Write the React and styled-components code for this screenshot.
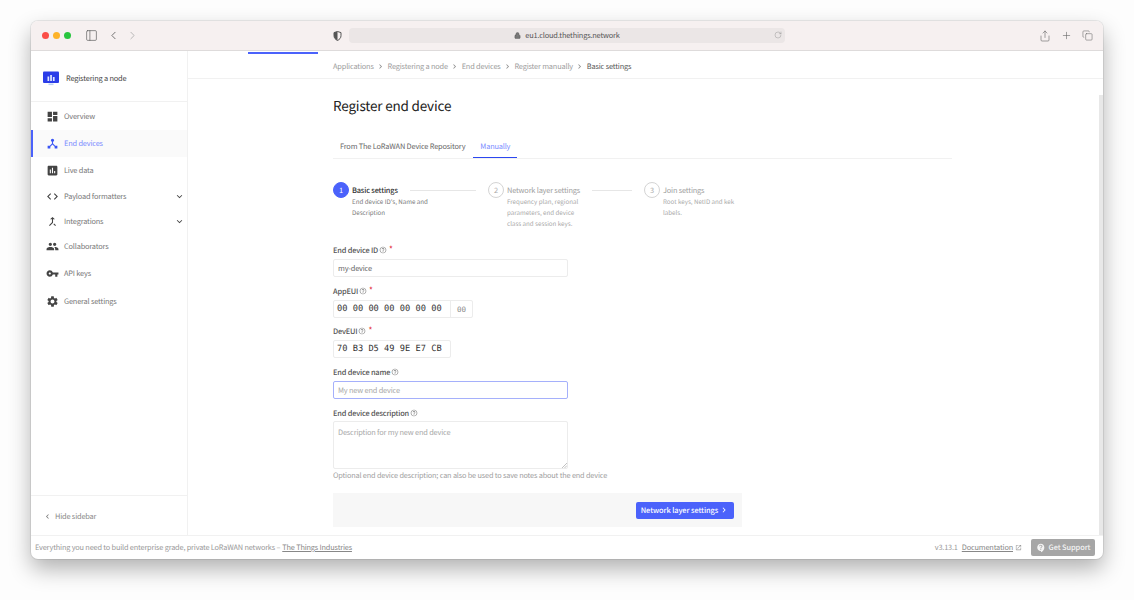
import React from 'react';
import styled, { createGlobalStyle } from 'styled-components';
import { Share, Plus, Copy, PanelLeft, ChevronLeft, ChevronRight, Lock, RotateCw } from 'lucide-react';
import { MdDashboard, MdDeviceHub, MdInsertChart, MdCode, MdCallMerge, MdGroup, MdVpnKey, MdSettings, MdKeyboardArrowDown, MdKeyboardArrowLeft, MdKeyboardArrowRight, MdHelpOutline, MdOpenInNew, MdContactSupport } from 'react-icons/md';

const Global = createGlobalStyle`
  html, body { margin: 0; padding: 0; background: #fff; height: 600px; overflow: hidden; }
  * { box-sizing: border-box; }
  body { font-family: "Noto Sans CJK SC", "Noto Sans", sans-serif; text-rendering: geometricPrecision; letter-spacing: -0.011em; }
`;
const Page = styled.div`padding: 21px 31px; height: 600px; background: #fdfdfd;`;
const Win = styled.div`
  position: relative; width: 1072px; height: 538px; background: #fff; border-radius: 7px; overflow: hidden;
  display: flex; flex-direction: column;
  box-shadow: 0 0 0 1px rgba(0,0,0,.07), 0 10px 22px rgba(0,0,0,.3);
`;
const Titlebar = styled.div`
  height: 30px; flex: none; display: flex; align-items: center; background: #f6f0f0; border-bottom: 1px solid #dedbdb;
  padding: 0 10px 0 11px; color: #666;
`;
const Lights = styled.div`display: flex; gap: 4px; margin-right: 14px;`;
const Light = styled.span`width: 7px; height: 7px; border-radius: 50%; background: ${p => p.$c};`;
const NavIcon = styled.span`display: flex; color: ${p => p.$dim ? '#aaa' : '#555'}; margin-left: ${p => p.$ml || 0}px;`;
const Address = styled.div`
  width: 436px; height: 15px; margin-left: 7px; border-radius: 4px; background: #ebe6e6; display: flex; align-items: center; justify-content: center;
  font-size: 7.4px; color: #555; gap: 4px; position: relative;
`;
const Reload = styled.span`position: absolute; right: 3px; top: 3px; display: flex; color: #888;`;
const TitleRight = styled.div`margin-left: auto; display: flex; align-items: center; gap: 10px; color: #666;`;
const Body = styled.div`flex: 1; display: flex; min-height: 0;`;
const Sidebar = styled.aside`width: 157px; flex: none; border-right: 1px solid #f1f1f1; display: flex; flex-direction: column;`;
const Brand = styled.div`height: 51px; flex: none; padding: 4px 0 0 12px; display: flex; align-items: center; gap: 7px; border-bottom: 1px solid #f1f1f1; font-size: 7.4px; color: #444;`;
const Nav = styled.nav`flex: 1; padding-top: 1px;`;
const Item = styled.div`
  height: ${p => p.$h || 27}px; display: flex; align-items: center; padding: 0 2px 0 13px; gap: 5px; font-size: 7.4px;
  color: ${p => p.$active ? '#7b8cff' : '#777'}; background: ${p => p.$active ? '#fafafa' : 'transparent'};
  border-left: 2px solid ${p => p.$active ? '#4b62fb' : 'transparent'};
  svg { flex: none; color: ${p => p.$active ? '#3a55f5' : '#444'}; }
`;
const ItemChevron = styled.span`margin-left: auto; display: flex;`;
const HideBar = styled.div`height: 40px; flex: none; border-top: 1px solid #f1f1f1; display: flex; align-items: center; padding: 1px 0 0 12px; gap: 3px; font-size: 7.4px; color: #888; svg { color: #777; }`;
const Main = styled.main`flex: 1; min-width: 0; overflow: hidden; display: flex; flex-direction: column;`;
const Strip = styled.div`height: 3px; flex: none; padding-left: 60px; display: flex; align-items: flex-end;`;
const StripMark = styled.span`width: 70px; height: 2px; background: #4b62fb;`;
const Crumbs = styled.div`height: 25px; flex: none; border-bottom: 1px solid #f1f1f1; padding: 1px 0 0 145px; display: flex; align-items: center; font-size: 7.4px; color: #9c9c9c; gap: 2.4px; svg { color: #888; }`;
const Crumb = styled.span`color: ${p => p.$cur ? '#555' : 'inherit'};`;
const Content = styled.div`padding: 16px 0 0 145px; width: 764px;`;
const Title = styled.h1`margin: 0; font-size: 13.5px; line-height: 20px; font-weight: 400; color: #222;`;
const Tabs = styled.div`margin-top: 20px; height: 24px; border-bottom: 1px solid #f1f1f1; display: flex; font-size: 7.4px;`;
const Tab = styled.div`
  height: 23px; padding: 1px 7px 0; display: flex; align-items: center; margin-right: ${p => p.$mr || 0}px;
  color: ${p => p.$active ? '#7b8cff' : '#666'}; border-bottom: 1px solid ${p => p.$active ? '#2c47f0' : 'transparent'};
`;
const Stepper = styled.div`margin-top: 23px; display: flex; height: 47px;`;
const Step = styled.div`width: ${p => p.$w}px; display: flex; gap: 3px;`;
const Circle = styled.span`
  width: 16px; height: 16px; flex: none; border-radius: 50%; display: flex; align-items: center; justify-content: center; font-size: 7.4px;
  background: ${p => p.$on ? '#4b62fb' : '#fff'}; color: ${p => p.$on ? '#fff' : '#aaa'}; border: 1px solid ${p => p.$on ? '#4b62fb' : '#d4d4d4'};
`;
const StepText = styled.div`flex: 1; padding: 2px 12px 0 0; min-width: 0;`;
const StepHead = styled.div`display: flex; align-items: center; height: 12px; gap: 12px; font-size: 7.4px; font-weight: ${p => p.$on ? 500 : 400}; color: ${p => p.$on ? '#333' : '#9e9e9e'}; white-space: nowrap;`;
const StepLine = styled.span`flex: 1; height: 1px; background: #e6e6e6;`;
const StepDesc = styled.div`font-size: 6.2px; line-height: 11px; color: ${p => p.$on ? '#777' : '#a8a8a8'}; width: 82px; letter-spacing: 0;`;
const Field = styled.div`margin-top: ${p => p.$mt ?? 8}px;`;
const Label = styled.label`height: 12px; display: flex; align-items: center; font-size: 7.4px; font-weight: 500; color: #555; gap: 1px; svg { color: #888; }`;
const Req = styled.span`color: #e5484d; font-size: 8px; margin-left: 1px; position: relative; top: -1px;`;
const Input = styled.div`
  margin-top: ${p => p.$mt ?? 3}px; width: 235px; height: ${p => p.$h || 18}px; padding: ${p => p.$area ? '5px 4px 0' : '0 4px'}; display: flex;
  align-items: ${p => p.$area ? 'flex-start' : 'center'}; border-radius: 2px; font-size: 7.4px; position: relative;
  border: 1px solid ${p => p.$focus ? '#a5b0fb' : '#ececec'}; color: ${p => p.$ph ? '#a8a8a8' : '#666'};
`;
const Byte = styled.div`
  margin-top: 3px; display: flex; width: fit-content; height: 18px; border: 1px solid #ececec; border-radius: 2px; font-family: "DejaVu Sans Mono", monospace; font-size: 8.7px; color: #333; letter-spacing: 0;
`;
const ByteMain = styled.span`width: 116px; padding-left: 3px; display: flex; align-items: center; white-space: pre;`;
const ByteSide = styled.span`width: 22px; border-left: 1px solid #ececec; display: flex; align-items: center; justify-content: center; color: #888; font-size: 7.5px;`;
const Grip = styled.svg`position: absolute; right: 0; bottom: 0;`;
const Help = styled.div`margin-top: 1px; height: 12px; font-size: 7.35px; line-height: 12px; color: #a0a0a0;`;
const Actions = styled.div`margin-top: 11px; width: 409px; height: 34px; background: #f7f7f7; display: flex; align-items: center; justify-content: flex-end; padding-right: 8px;`;
const Primary = styled.button`
  width: 98px; height: 17px; border: 0; border-radius: 2px; background: #4b62fb; color: #fff; font: 500 7.4px "Noto Sans CJK SC", sans-serif; white-space: nowrap; letter-spacing: -0.011em;
  display: flex; align-items: center; justify-content: center; gap: 1px; padding: 0; text-rendering: geometricPrecision;
`;
const Footer = styled.footer`height: 24px; flex: none; border-top: 1px solid #f1f1f1; display: flex; align-items: center; padding: 0 8px 0 4px; font-size: 7.37px; color: #999;`;
const FootLink = styled.a`color: #888; text-decoration: underline; margin-left: ${p => p.$ml || 0}px;`;
const FootRight = styled.div`margin-left: auto; display: flex; align-items: center; gap: 2px;`;
const Support = styled.button`
  margin-left: 7px; width: 64px; height: 17px; border: 0; border-radius: 2px; background: #a6a6a6; color: #f4f4f4; font: 500 7.4px "Noto Sans CJK SC", sans-serif; white-space: nowrap; letter-spacing: -0.011em;
  display: flex; align-items: center; justify-content: center; gap: 3px; padding: 0; text-rendering: geometricPrecision;
`;
const Scroll = styled.div`position: absolute; right: 0; top: 74px; bottom: 24px; width: 4px; background: #e8e8e8;`;

const Logo = () => (
  <svg width="16" height="15" viewBox="0 0 16 15">
    <rect x="0" y="0.5" width="16" height="11.500" rx="1" fill="#2b3de8" />
    <rect x="4.500" y="5.500" width="1.700" height="4.500" fill="#dfe6ff" /><rect x="7.200" y="4" width="1.700" height="6" fill="#dfe6ff" /><rect x="9.900" y="6" width="1.700" height="4" fill="#dfe6ff" />
    <rect x="5.500" y="12.500" width="5" height="1.600" fill="#bcd0f5" />
  </svg>
);
const Q = () => <MdHelpOutline size={8} />;

const items = [
  [MdDashboard, 'Overview', 0, 0, 27], [MdDeviceHub, 'End devices', 1, 0, 27], [MdInsertChart, 'Live data', 0, 0, 27],
  [MdCode, 'Payload formatters', 0, 1, 25], [MdCallMerge, 'Integrations', 0, 1, 25], [MdGroup, 'Collaborators', 0, 0, 25], [MdVpnKey, 'API keys', 0, 0, 29], [MdSettings, 'General settings', 0, 0, 27],
];
const crumbs = ['Applications', 'Registering a node', 'End devices', 'Register manually'];

export default function App() {
  return (
    <Page>
      <Global />
      <Win>
        <Titlebar>
          <Lights><Light $c="#fb4e48" /><Light $c="#fdb32a" /><Light $c="#29c53f" /></Lights>
          <NavIcon><PanelLeft size={13} strokeWidth={1.2} /></NavIcon>
          <NavIcon $ml={9}><ChevronLeft size={13} strokeWidth={1.5} /></NavIcon>
          <NavIcon $dim $ml={6}><ChevronRight size={13} strokeWidth={1.5} /></NavIcon>
          <NavIcon $ml={194}>
            <svg width="9" height="10" viewBox="0 0 9 10"><path d="M4.500.5 8 1.600v3c0 2.400-1.500 3.900-3.500 4.900C2.500 8.500 1 7 1 4.600v-3z" fill="none" stroke="#555" /><path d="M4.500.5 1 1.600v3c0 2.400 1.500 3.900 3.500 4.900z" fill="#555" /></svg>
          </NavIcon>
          <Address>
            <Lock size={7} fill="#777" strokeWidth={1.5} />eu1.cloud.thethings.network
            <Reload><RotateCw size={8} strokeWidth={1.2} /></Reload>
          </Address>
          <TitleRight>
            <Share size={12} strokeWidth={1.2} />
            <Plus size={11} strokeWidth={1.3} />
            <Copy size={11} strokeWidth={1.2} />
          </TitleRight>
        </Titlebar>
        <Body>
          <Sidebar>
            <Brand><Logo />Registering a node</Brand>
            <Nav>
              {items.map(([Icon, label, active, chev, h]) => (
                <Item key={label} $active={!!active} $h={h}>
                  <Icon size={13} />{label}
                  {chev ? <ItemChevron><MdKeyboardArrowDown size={11} /></ItemChevron> : null}
                </Item>
              ))}
            </Nav>
            <HideBar><MdKeyboardArrowLeft size={9} />Hide sidebar</HideBar>
          </Sidebar>
          <Main>
            <Strip><StripMark /></Strip>
            <Crumbs>
              {crumbs.map(c => <React.Fragment key={c}><Crumb>{c}</Crumb><MdKeyboardArrowRight size={9} /></React.Fragment>)}
              <Crumb $cur>Basic settings</Crumb>
            </Crumbs>
            <Content>
              <Title>Register end device</Title>
              <Tabs>
                <Tab $mr={1}>From The LoRaWAN Device Repository</Tab>
                <Tab $active>Manually</Tab>
              </Tabs>
              <Stepper>
                <Step $w={155}>
                  <Circle $on>1</Circle>
                  <StepText>
                    <StepHead $on>Basic settings<StepLine /></StepHead>
                    <StepDesc $on>End device ID's, Name and Description</StepDesc>
                  </StepText>
                </Step>
                <Step $w={156}>
                  <Circle>2</Circle>
                  <StepText>
                    <StepHead>Network layer settings<StepLine /></StepHead>
                    <StepDesc>Frequency plan, regional parameters, end device class and session keys.</StepDesc>
                  </StepText>
                </Step>
                <Step $w={155}>
                  <Circle>3</Circle>
                  <StepText>
                    <StepHead>Join settings</StepHead>
                    <StepDesc>Root keys, NetID and kek labels.</StepDesc>
                  </StepText>
                </Step>
              </Stepper>
              <Field $mt={15}>
                <Label>End device ID <Q /><Req>*</Req></Label>
                <Input>my-device</Input>
              </Field>
              <Field>
                <Label>AppEUI <Q /><Req>*</Req></Label>
                <Byte><ByteMain>00 00 00 00 00 00 00</ByteMain><ByteSide>00</ByteSide></Byte>
              </Field>
              <Field $mt={7}>
                <Label>DevEUI <Q /><Req>*</Req></Label>
                <Byte><ByteMain>70 B3 D5 49 9E E7 CB</ByteMain></Byte>
              </Field>
              <Field>
                <Label>End device name <Q /></Label>
                <Input $focus $ph>My new end device</Input>
              </Field>
              <Field>
                <Label>End device description <Q /></Label>
                <Input $mt={2} $h={48} $area $ph>
                  Description for my new end device
                  <Grip width="5" height="5" viewBox="0 0 5 5"><path d="M0 5 5 0M2.500 5 5 2.500" stroke="#999" strokeWidth=".6" /></Grip>
                </Input>
                <Help>Optional end device description; can also be used to save notes about the end device</Help>
              </Field>
              <Actions>
                <Primary>Network layer settings <MdKeyboardArrowRight size={10} /></Primary>
              </Actions>
            </Content>
          </Main>
        </Body>
        <Footer>
          Everything you need to build enterprise grade, private LoRaWAN networks – <FootLink $ml={2}>The Things Industries</FootLink>
          <FootRight>
            v3.13.1 <FootLink $ml={2}>Documentation</FootLink><MdOpenInNew size={7} />
            <Support><MdContactSupport size={10} />Get Support</Support>
          </FootRight>
        </Footer>
        <Scroll />
      </Win>
    </Page>
  );
}
